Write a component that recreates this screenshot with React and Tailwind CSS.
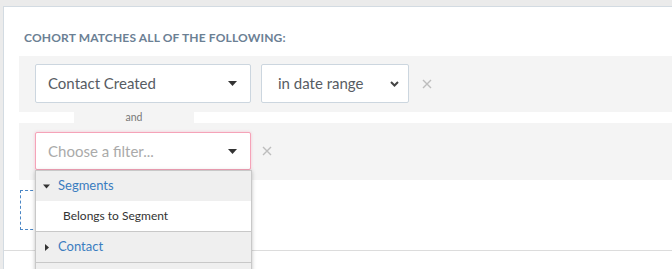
const Caret = ({ className = '' }) => (
  <svg width="9" height="5" viewBox="0 0 9 5" className={className}>
    <path d="M0 0h9L4.5 5z" fill="currentColor" />
  </svg>
);

const Chevron = () => (
  <svg width="9" height="6" viewBox="0 0 9 6">
    <path d="M1 1l3.5 3.5L8 1" fill="none" stroke="#444" strokeWidth="2" />
  </svg>
);

const Remove = () => (
  <svg width="10" height="10" viewBox="0 0 10 10" className="shrink-0">
    <path d="M1 1l8 8M9 1l-8 8" stroke="#bdbdbd" strokeWidth="1.4" />
  </svg>
);

const App = () => {
  return (
    <div
      className="w-[672px] h-[269px] overflow-hidden bg-[#ebebeb] pt-[6px] pl-[3px]"
      style={{ fontFamily: 'Lato, "Liberation Sans", sans-serif' }}
    >
      <div className="h-[300px] bg-white border-t border-l border-[#d3dbe2]">
        <div className="pl-[20px] pt-[24px] h-[49px] text-[12px] leading-[14px] font-bold uppercase text-[#6b8094] tracking-[0.15px]">
          Cohort matches all of the following:
        </div>

        {/* first filter row */}
        <div className="ml-[15px] bg-[#f4f4f4] h-[56px] pt-[8px] pl-[16px] flex items-start">
          <div className="w-[216px] h-[39px] bg-white border border-[#ccd6df] rounded-[2px] flex items-center justify-between pl-[12px] pr-[13px] text-[15px] text-[#575c63]">
            <span>Contact Created</span>
            <Caret className="text-[#333]" />
          </div>
          <div className="ml-[10px] w-[148px] h-[39px] bg-white border border-[#ccd6df] rounded-[2px] flex items-center justify-between pl-[16px] pr-[9px] text-[15px] text-[#575c63]">
            <span>in date range</span>
            <Chevron />
          </div>
          <div className="ml-[13px] h-[39px] flex items-center">
            <Remove />
          </div>
        </div>

        <div className="ml-[70px] w-[120px] h-[11px] bg-[#f4f4f4] text-[10.5px] leading-[11px] text-[#777] text-center">
          and
        </div>

        {/* second filter row */}
        <div className="ml-[15px] bg-[#f4f4f4] h-[57px] pt-[9px] pl-[16px] flex items-start">
          <div className="relative w-[216px]">
            <div className="h-[38px] bg-white border border-[#f5a3b8] shadow-[0_0_3px_rgba(245,140,170,0.45)] rounded-[2px] flex items-center justify-between pl-[12px] pr-[13px] text-[15px] text-[#aaa]">
              <span>Choose a filter...</span>
              <Caret className="text-[#333]" />
            </div>
            <div className="absolute z-10 left-0 top-[38px] w-[217px] bg-[#efefef] border border-[#c8c8c8] shadow-[0_1px_4px_rgba(0,0,0,0.25)] h-[120px]">
              <div className="h-[30px] flex items-center pl-[7px] text-[13px] text-[#3a7dbf]">
                <Caret className="text-[#333] mr-[8px] w-[7px]" />
                <span>Segments</span>
              </div>
              <div className="h-[31px] bg-white border-b border-[#c8c8c8] flex items-center pl-[27px] text-[12px] text-[#333]">
                Belongs to Segment
              </div>
              <div className="h-[31px] border-b border-[#c8c8c8] flex items-center pl-[9px] text-[13px] text-[#3a7dbf]">
                <svg width="4" height="7" viewBox="0 0 4 7" className="mr-[9px]">
                  <path d="M0 0l4 3.5L0 7z" fill="#333" />
                </svg>
                <span>Contact</span>
              </div>
            </div>
          </div>
          <div className="ml-[11px] h-[38px] flex items-center">
            <Remove />
          </div>
        </div>

        <div className="ml-[16px] mt-[10px] w-[170px] h-[40px] border border-dashed border-[#4a86c5]" />

        <div className="mt-[20px] border-t border-[#dcdcdc]" />
      </div>
    </div>
  );
};

export default App;
